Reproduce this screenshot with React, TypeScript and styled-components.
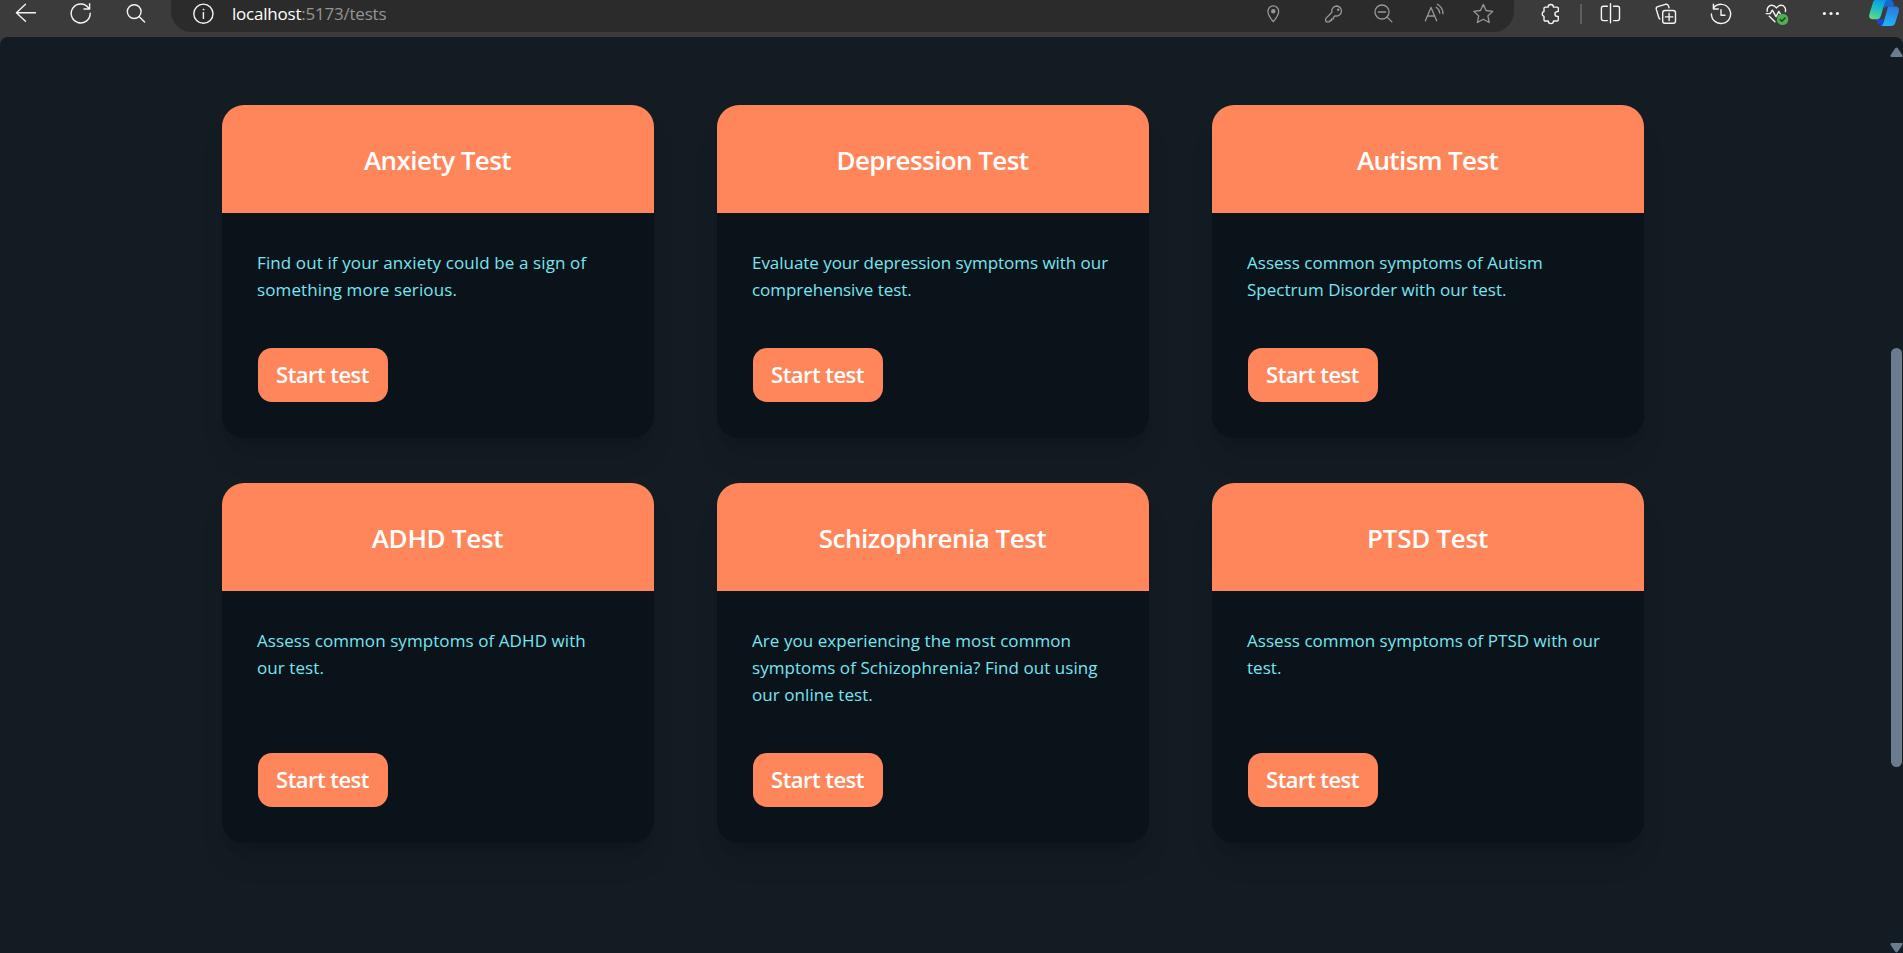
import React from 'react';
import styled, { createGlobalStyle } from 'styled-components';

const GlobalStyle = createGlobalStyle`
  *, *::before, *::after { box-sizing: border-box; }
  html, body, #root { height: 100%; }
  body {
    margin: 0;
    overflow: hidden;
    background: #3b3b3b;
    font-family: 'Open Sans', 'Noto Sans', sans-serif;
  }
`;

const Window = styled.div`
  display: flex;
  flex-direction: column;
  width: 100%;
  height: 100vh;
  overflow: hidden;
`;

const Toolbar = styled.header`
  display: flex;
  flex: none;
  align-items: flex-start;
  height: 37px;
  padding-left: 14px;
  overflow: hidden;
  background: #3b3b3b;
`;

const Icon = styled.svg<{ $before?: number; $dim?: boolean }>`
  flex: none;
  width: 24px;
  height: 24px;
  margin-top: 2px;
  margin-left: ${(p) => p.$before ?? 0}px;
  fill: none;
  stroke: ${(p) => (p.$dim ? '#999999' : '#f4f4f4')};
  stroke-width: ${(p) => (p.$dim ? 1.3 : 1.4)};
  stroke-linecap: round;
  stroke-linejoin: round;
`;

const Logo = styled.svg`
  flex: none;
  width: 32px;
  height: 27px;
  margin-left: 25px;
`;

const AddressBar = styled.div`
  display: flex;
  flex: none;
  align-items: flex-start;
  width: 1343px;
  height: 32px;
  margin-left: 23px;
  padding: 0 19px 0 20px;
  border-radius: 0 0 20px 20px / 0 0 21px 21px;
  background: #2b2b2b;
`;

const Url = styled.div`
  flex: 1;
  padding-left: 17px;
  color: #949494;
  font-size: 17px;
  line-height: 28px;
  letter-spacing: -0.22px;
  white-space: nowrap;
`;

const Host = styled.span`
  color: #ffffff;
`;

const Divider = styled.span`
  flex: none;
  width: 2px;
  height: 20px;
  margin: 4px 0 0 17px;
  background: #5e5e5e;
`;

const Viewport = styled.div`
  display: flex;
  flex: 1;
  justify-content: space-between;
  min-height: 0;
  border-radius: 8px 8px 0 0;
  background: #121c22;
`;

const Page = styled.main`
  padding: 68px 0 0 222px;
`;

const CardGrid = styled.section`
  display: grid;
  grid-template-columns: repeat(3, 432px);
  gap: 45px 63px;
`;

const Card = styled.article`
  display: flex;
  flex-direction: column;
  overflow: hidden;
  border-radius: 22px;
  background: #091319;
  box-shadow: 0 22.5px 28px -5.6px rgba(0, 0, 0, 0.1), 0 9px 11px -6.75px rgba(0, 0, 0, 0.1);
`;

const CardHeader = styled.div`
  display: flex;
  align-items: center;
  justify-content: center;
  height: 108px;
  padding: 2px 1px 0 0;
  background: #ff865b;
`;

const CardTitle = styled.h2<{ $tracking: number }>`
  margin: 0;
  color: #ffffff;
  font-size: 26px;
  font-weight: 600;
  letter-spacing: ${(p) => p.$tracking}px;
`;

const CardBody = styled.div`
  display: flex;
  flex: 1;
  flex-direction: column;
  align-items: flex-start;
  justify-content: space-between;
  gap: 45px;
  padding: 36px;
`;

const Description = styled.p<{ $tracking: number }>`
  max-width: 359px;
  margin: 0 0 0 -1px;
  color: #78e6f0;
  font-size: 17px;
  line-height: 27px;
  letter-spacing: ${(p) => p.$tracking}px;
`;

const StartButton = styled.button`
  width: 130px;
  height: 54px;
  padding: 0 1px 2px 0;
  border: 0;
  border-radius: 14px;
  background: #ff865b;
  color: #ffffff;
  font-family: inherit;
  font-size: 22px;
  font-weight: 600;
  letter-spacing: -0.55px;
`;

const Scrollbar = styled.div`
  display: flex;
  flex-direction: column;
  justify-content: space-between;
  align-items: center;
  width: 13px;
  padding-top: 10px;
`;

const Arrow = styled.svg`
  display: block;
  width: 13px;
  height: 10px;
  fill: #6b7c8f;
`;

const Thumb = styled.div`
  width: 11px;
  height: 419px;
  margin-top: 115px;
  border-radius: 6px;
  background: #6b7c8f;
`;

const tests = [
  {
    name: 'Anxiety Test',
    titleTracking: -0.55,
    textTracking: 0.11,
    text: 'Find out if your anxiety could be a sign of something more serious.',
  },
  {
    name: 'Depression Test',
    titleTracking: -0.57,
    textTracking: -0.04,
    text: 'Evaluate your depression symptoms with our comprehensive test.',
  },
  {
    name: 'Autism Test',
    titleTracking: -0.62,
    textTracking: 0.02,
    text: 'Assess common symptoms of Autism Spectrum Disorder with our test.',
  },
  {
    name: 'ADHD Test',
    titleTracking: -0.3,
    textTracking: 0.08,
    text: 'Assess common symptoms of ADHD with our test.',
  },
  {
    name: 'Schizophrenia Test',
    titleTracking: -0.5,
    textTracking: 0.06,
    text: 'Are you experiencing the most common symptoms of Schizophrenia? Find out using our online test.',
  },
  {
    name: 'PTSD Test',
    titleTracking: -0.28,
    textTracking: 0.04,
    text: 'Assess common symptoms of PTSD with our test.',
  },
];

function BrowserToolbar() {
  return (
    <Toolbar>
      <Icon viewBox="0 0 24 24">
        <path d="M21.5 10.7H2.4M11.5 2.3L2.4 10.7l9.1 8.6" />
      </Icon>
      <Icon viewBox="0 0 24 24" $before={31}>
        <path d="M21.2 11.3A9.5 9.5 0 1 1 19.6 6.2M20.6 1.6V7H15" />
      </Icon>
      <Icon viewBox="0 0 24 24" $before={31}>
        <circle cx="10.2" cy="9.6" r="6.9" />
        <path d="M15.3 14.7l5.3 5.3" />
      </Icon>
      <AddressBar>
        <Icon viewBox="0 0 24 24">
          <circle cx="12.4" cy="11.7" r="9.6" />
          <path d="M12.4 10.6v5.8" />
          <circle cx="12.4" cy="7.6" r="0.5" fill="#f4f4f4" strokeWidth="0.8" />
        </Icon>
        <Url>
          <Host>localhost</Host>:5173/tests
        </Url>
        <Icon viewBox="0 0 24 24" $dim>
          <path d="M12.3 19.7C10 17 6.9 13 6.9 9.3a5.4 5.4 0 0 1 10.8 0C17.7 13 14.6 17 12.3 19.7z" />
          <circle cx="12.3" cy="9.3" r="1.6" fill="#999999" />
        </Icon>
        <Icon viewBox="0 0 24 24" $before={36} $dim>
          <path d="M15.5 4a5 5 0 1 1-1.4 9.8l-1.6 1.5v1.5h-1.9v1.7H8.9v.8l-.6.5H5.4l-.7-.7v-2.5l6.2-6.3A5 5 0 0 1 15.5 4z" />
          <circle cx="17.2" cy="7.7" r="0.6" fill="#999999" />
        </Icon>
        <Icon viewBox="0 0 24 24" $before={26} $dim>
          <circle cx="11" cy="10" r="7" />
          <path d="M7.4 10h7.2M16.1 15.1l4.8 4.8" />
        </Icon>
        <Icon viewBox="0 0 24 24" $before={27} $dim>
          <path d="M3.4 18.8L9 5.4l5.7 13.4M5.4 14h7.3M14.2 5.3A8 8 0 0 1 17.8 11.2M15.4 2.2A11 11 0 0 1 21 11.8" />
        </Icon>
        <Icon viewBox="0 0 24 24" $before={25} $dim>
          <path d="M12.3 2.4L15.1 8.5l6.7.8-4.9 4.6 1.3 6.6-5.9-3.3-5.9 3.3 1.3-6.6-4.9-4.6 6.7-.8z" />
        </Icon>
      </AddressBar>
      <Icon viewBox="0 0 24 24" $before={25}>
        <path d="M6.2 5.1h3a2.6 2.6 0 0 1 5.2 0h3.7a1.2 1.2 0 0 1 1.2 1.2v3.3h-1a2.4 2.4 0 0 0 0 4.8h1v3.4a1.2 1.2 0 0 1-1.2 1.2h-3.6a2.6 2.6 0 0 1-5.2 0H6.2A1.2 1.2 0 0 1 5 17.8v-3.5a2.5 2.5 0 0 1 0-4.8V6.3a1.2 1.2 0 0 1 1.2-1.2z" />
      </Icon>
      <Divider />
      <Icon viewBox="0 0 24 24" $before={17}>
        <path d="M8.4 4.2H4.4a2 2 0 0 0-2 2v10.4a2 2 0 0 0 2 2h4M11.5 1.7v19M14.6 4.2h3.9a2 2 0 0 1 2 2v10.4a2 2 0 0 1-2 2h-3.9" />
      </Icon>
      <Icon viewBox="0 0 24 24" $before={31}>
        <rect x="8.7" y="8.5" width="12.8" height="12.8" rx="2.2" />
        <path d="M15.1 11.2v7.4M11.4 14.9h7.4M5.9 17A3 3 0 0 1 4.7 15.3L2.3 7.4a2.3 2.3 0 0 1 1.5-2.8l7.6-2.3a2.6 2.6 0 0 1 3.1 1.6l.5 1.9" />
      </Icon>
      <Icon viewBox="0 0 24 24" $before={31}>
        <path d="M2.4 11.9A9.6 9.6 0 1 0 4.6 5.8M4.4 2.3V7h4.9M12 7.6v5.6h4" />
      </Icon>
      <Icon viewBox="0 0 24 24" $before={32}>
        <path d="M2.2 9.2C1.7 5.7 4 3.3 6.7 3.3c2 0 3.4 1 4.7 2.6 1.3-1.6 2.7-2.6 4.7-2.6 2.9 0 5.1 2.6 4.3 6.2M1.2 11.6h4l2.2-3.4 3.6 6.4 2.8-5.2 1.5 2.4M4.3 14.3l5.6 5.5" />
        <circle cx="17.6" cy="17.4" r="5.7" fill="#4caf50" stroke="none" />
        <path d="M15.2 17.6l1.6 1.6 3.2-3.3" stroke="#263a27" />
      </Icon>
      <Icon viewBox="0 0 24 24" $before={30}>
        <g fill="#f4f4f4" stroke="none">
          <circle cx="5.4" cy="11.5" r="1.6" />
          <circle cx="12" cy="11.5" r="1.6" />
          <circle cx="18.4" cy="11.5" r="1.6" />
        </g>
      </Icon>
      <Logo viewBox="0 0 32 27">
        <defs>
          <linearGradient id="ribbonLeft" x1="0.6" y1="0" x2="0.3" y2="1">
            <stop offset="0" stopColor="#0c9bdf" />
            <stop offset="0.5" stopColor="#1fc0c4" />
            <stop offset="1" stopColor="#62d884" />
          </linearGradient>
          <linearGradient id="ribbonRight" x1="0.6" y1="0" x2="0.4" y2="1">
            <stop offset="0" stopColor="#2b78de" />
            <stop offset="1" stopColor="#22b4fa" />
          </linearGradient>
        </defs>
        <path d="M16 0h6.8c1.3 0 2 1 2.4 2.4l1.1 4.2h-6.8c-1.9 0-2.7 1-3.2 2.6z" fill="#1668d4" />
        <path d="M8 19.2h7.8L14.4 26c-2.6 0-4-1-4.7-3.4z" fill="#1746dc" />
        <path d="M7 0h12c-1 0-1.7 1.2-2.2 2.7l-4 13.4c-.6 2-1.6 3.1-3.6 3.1H4.6C1.5 19.2.7 16.8 1.4 14.3L5 2.2C5.3 1.2 6 .3 7 0z" fill="url(#ribbonLeft)" />
        <path d="M20.2 6.6h7.3c3 0 4 2.2 3.3 4.8l-3.5 11.4c-.7 2.2-2.3 3.3-4.6 3.3H13c1.2-.3 1.9-1.4 2.4-3l3.8-13.3c.4-1.5.4-2.4 1-3.2z" fill="url(#ribbonRight)" />
      </Logo>
    </Toolbar>
  );
}

export default function App() {
  return (
    <Window>
      <GlobalStyle />
      <BrowserToolbar />
      <Viewport>
        <Page>
          <CardGrid>
            {tests.map((test) => (
              <Card key={test.name}>
                <CardHeader>
                  <CardTitle $tracking={test.titleTracking}>{test.name}</CardTitle>
                </CardHeader>
                <CardBody>
                  <Description $tracking={test.textTracking}>{test.text}</Description>
                  <StartButton>Start test</StartButton>
                </CardBody>
              </Card>
            ))}
          </CardGrid>
        </Page>
        <Scrollbar>
          <Arrow viewBox="0 0 13 10">
            <path d="M5.3 1.2q1.2-1.6 2.4 0L12.4 8q.6 2-1 2H1.6q-1.6 0-1-2z" />
          </Arrow>
          <Thumb />
          <Arrow viewBox="0 0 13 10">
            <path d="M5.3 8.8q1.2 1.6 2.4 0L12.4 2q.6-2-1-2H1.6q-1.6 0-1 2z" />
          </Arrow>
        </Scrollbar>
      </Viewport>
    </Window>
  );
}
